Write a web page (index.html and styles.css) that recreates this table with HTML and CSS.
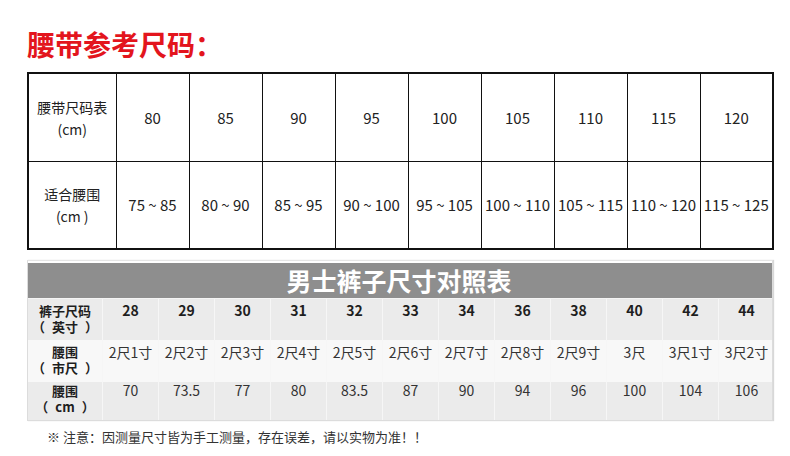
FILE: index.html
```html
<!DOCTYPE html>
<html lang="zh">
<head>
<meta charset="utf-8">
<link rel="stylesheet" href="styles.css">
</head>
<body>
<div class="page">
  <h1 class="title">腰带参考尺码：</h1>
  <table class="belt">
    <colgroup><col class="c-head"><col span="9" class="c-val"></colgroup>
    <tr class="r1">
      <td class="lbl">腰带尺码表<br>(cm)</td>
      <td>80</td><td>85</td><td>90</td><td>95</td><td>100</td><td>105</td><td>110</td><td>115</td><td>120</td>
    </tr>
    <tr class="r2">
      <td class="lbl">适合腰围<br>(cm )</td>
      <td>75 ~ 85</td><td>80 ~ 90</td><td>85 ~ 95</td><td>90 ~ 100</td><td>95 ~ 105</td><td>100 ~ 110</td><td>105 ~ 115</td><td>110 ~ 120</td><td>115 ~ 125</td>
    </tr>
  </table>

  <div class="pants">
    <div class="pants-head">男士裤子尺寸对照表</div>
    <div class="prow prow-a bold">
      <div class="pc first"><span class="ln">裤子尺码</span><span class="ln"><span class="po">（</span>英寸<span class="pcl">）</span></span></div>
      <div class="pc">28</div><div class="pc">29</div><div class="pc">30</div><div class="pc">31</div><div class="pc">32</div><div class="pc">33</div><div class="pc">34</div><div class="pc">36</div><div class="pc">38</div><div class="pc">40</div><div class="pc">42</div><div class="pc">44</div>
    </div>
    <div class="prow prow-b">
      <div class="pc first"><span class="ln">腰围</span><span class="ln"><span class="po">（</span>市尺<span class="pcl">）</span></span></div>
      <div class="pc">2尺1寸</div><div class="pc">2尺2寸</div><div class="pc">2尺3寸</div><div class="pc">2尺4寸</div><div class="pc">2尺5寸</div><div class="pc">2尺6寸</div><div class="pc">2尺7寸</div><div class="pc">2尺8寸</div><div class="pc">2尺9寸</div><div class="pc">3尺</div><div class="pc">3尺1寸</div><div class="pc">3尺2寸</div>
    </div>
    <div class="prow prow-c">
      <div class="pc first"><span class="ln">腰围</span><span class="ln"><span class="po">（</span>cm<span class="pcl">）</span></span></div>
      <div class="pc">70</div><div class="pc">73.5</div><div class="pc">77</div><div class="pc">80</div><div class="pc">83.5</div><div class="pc">87</div><div class="pc">90</div><div class="pc">94</div><div class="pc">96</div><div class="pc">100</div><div class="pc">104</div><div class="pc">106</div>
    </div>
  </div>

  <p class="note">※ 注意：因测量尺寸皆为手工测量，存在误差，请以实物为准！！</p>
</div>
</body>
</html>
```

FILE: styles.css
```css
html, body {
  margin: 0;
  padding: 0;
  background: #ffffff;
}
body {
  font-family: "Noto Sans CJK SC", "Noto Sans", sans-serif;
  color: #222;
  text-spacing-trim: space-all;
}
.page {
  width: 746px;
  padding: 26px 0 0 27px;
}
.title {
  margin: 0;
  font-size: 28px;
  line-height: 36px;
  font-weight: 700;
  color: #e3151d;
}
.belt {
  margin-top: 10px;
  width: 744px;
  table-layout: fixed;
  border-collapse: collapse;
  border: 2px solid #111;
}
.c-head { width: 88px; }
.c-val { width: 73px; }
.belt td {
  border: 1px solid #111;
  text-align: center;
  vertical-align: middle;
  padding: 0;
  font-size: 15px;
  line-height: 20px;
  color: #222;
  white-space: nowrap;
}
.belt .r1 td { height: 87px; }
.belt .r2 td { height: 86px; }
.belt td.lbl {
  font-size: 14px;
  line-height: 22px;
}
.pants {
  margin-top: 10px;
  width: 744px;
  border: 1px solid #dcdcdc;
  border-top-color: #e6e6e6;
  padding-top: 2px;
  background: #fff;
  box-shadow: 1px 0 1px #d8d8d8;
}
.pants-head {
  height: 35px;
  background: #8e8e8e;
  color: #fff;
  font-size: 25px;
  font-weight: 700;
  line-height: 35px;
  text-align: center;
  text-indent: -2px;
}
.prow {
  display: grid;
  grid-template-columns: 74px repeat(12, 56px);
  font-size: 14px;
  line-height: 17px;
  color: #333;
}
.prow-a { background: #ebebeb; height: 41px; border-top: 1px solid #f4f4f4; }
.prow-b { background: #f8f8f8; height: 42px; }
.prow-c { background: #ebebeb; height: 38px; }
.bold { font-weight: 700; color: #1e1e1e; }
.pc {
  text-align: center;
  padding-top: 3px;
  border-left: 1px solid #f6f6f6;
  white-space: nowrap;
}
.pc.first {
  border-left: none;
  font-weight: 700;
  color: #1e1e1e;
  font-size: 13px;
  line-height: 17px;
  display: flex;
  flex-direction: column;
  align-items: center;
  padding-top: 3px;
}
.ln {
  display: block;
  height: 16px;
}
.po, .pcl {
  display: inline-block;
  width: 13px;
}
.po { text-align: right; margin-right: 7px; }
.pcl { text-align: left; margin-left: 7px; }
.prow-b .pc { padding-top: 4px; }
.prow-b .pc.first { padding-top: 3px; }
.prow-c .pc { padding-top: 0; }
.prow-c .pc.first { padding-top: 0; }
.note {
  margin: 7px 0 0 20px;
  font-size: 13px;
  line-height: 18px;
  color: #333;
}
```
